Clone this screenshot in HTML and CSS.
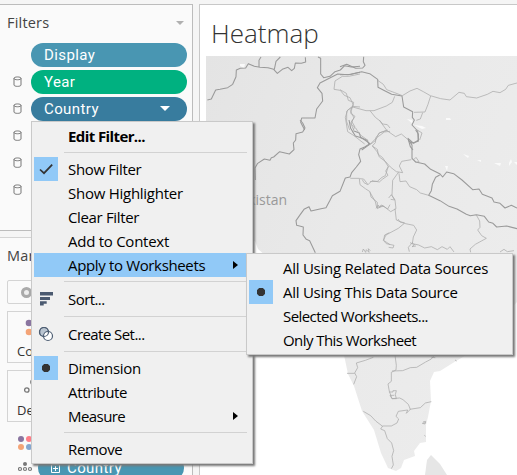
FILE: index.html
```html
<!DOCTYPE html>
<html lang="en"><head><meta charset="utf-8"><title>Heatmap</title><link rel="stylesheet" href="styles.css"></head>
<body>
<svg class="defs"><defs><symbol id="db" viewBox="0 0 9 11"><path d="M1 2.3C1 .5 8 .5 8 2.3V9C8 10.8 1 10.8 1 9ZM1 2.4C1 4.2 8 4.2 8 2.4" fill="none" stroke="#777"/></symbol></defs></svg>
<div class="app">
<aside class="side">
 <section class="panel filters">
  <header><h2>Filters</h2><i class="caret"></i></header>
  <div class="shelf"><span></span><b class="pill">Display</b></div>
  <div class="shelf"><svg><use href="#db"/></svg><b class="pill green">Year</b></div>
  <div class="shelf"><svg><use href="#db"/></svg><b class="pill dark">Country<i class="caret"></i></b></div>
  <div class="shelf"><svg><use href="#db"/></svg></div>
  <div class="shelf"><svg><use href="#db"/></svg></div>
  <div class="shelf"><svg><use href="#db"/></svg></div>
 </section>
 <section class="panel marks">
  <h2>Marks</h2>
  <div class="select"><i class="ring"></i></div>
  <div class="card"><svg width="26" height="18"><circle cx="4" cy="4" r="3.3" fill="#8a75a0"/><circle cx="4" cy="13" r="3.3" fill="#f4a477"/><circle cx="13" cy="4" r="3.3" fill="#ff7e88"/><circle cx="13" cy="13" r="3.3" fill="#86a7d0"/></svg><span>Color</span></div>
  <div class="card"><svg width="28" height="18"><g fill="none" stroke="#777" stroke-width="1.3"><circle cx="2.8" cy="12" r="2.2"/><circle cx="9" cy="4" r="2.2"/></g></svg><span>Detail</span></div>
  <div class="mark"><svg width="22" height="18"><circle cx="3" cy="4" r="3" fill="#8a75a0"/><circle cx="11" cy="4" r="3" fill="#ff7e88"/><circle cx="3" cy="12" r="3" fill="#f4a477"/><circle cx="11" cy="12" r="3" fill="#86a7d0"/></svg></div>
  <div class="mark last"><svg width="16" height="14"><circle cx="7" cy="4" r="2" fill="#777"/><g fill="none" stroke="#777" stroke-width="1.2"><circle cx="2" cy="9" r="1.5"/><circle cx="7" cy="9" r="1.5"/><circle cx="12" cy="9" r="1.5"/></g></svg><b class="pill"><svg width="9" height="9"><path d="M.5.5h8v8h-8zM2 4.5h5M4.5 2v5" fill="none" stroke="#fff"/></svg>Country</b></div>
 </section>
</aside>
<main class="sheet">
 <h1>Heatmap</h1>
 <svg class="map" viewBox="206 56 311 419">
  <defs><linearGradient id="land" x2="1" y2=".5"><stop stop-color="#e4e4e4"/><stop offset=".5" stop-color="#e9e9e9"/><stop offset="1" stop-color="#ececec"/></linearGradient></defs>
  <path d="M206 56H517V302L500 320 482 346 456 361 440 371 434 372 430 381 431 401 428 417 426 425V442L420 443 414 451 415 456 404 460 401 468 396 471 388 468 381 453 374 430 362 411 354 386 348 374 344 355 332 344 320 300 275 264 258 249 255 241 206 240Z" fill="url(#land)"/>
  <path d="M431 455 440 464 447 475H425L427 460Z" fill="#e6e6e6"/>
  <path d="M240 64l5 0-1 4-4-2zM407 119l5 1 2 5 8 1 4 2-4 1-8-4zM446 118l4 0 1 2-5 0zM463 154l6 2-1 2zM477 160h4v2zM494 163l7 0-1 3zM509 163l2-4 1 3-3 4zM514 162h3v3zM445 166l3 0-1 5z" fill="#fafafa"/>
  <g class="borders" transform="translate(200 0) scale(.33333)">
   <path d="M22 300L34 297 47 270 60 268 83 263 98 253 108 230 109 210 121 205 137 204 145 191 163 199 180 202 204 203 221 208 232 220 247 208 264 202 275 212 283 205 286 189 304 190 317 186 316 172M183 171L177 181 177 202M241 171L228 184 223 208M354 171L362 175 362 222 371 233 390 229 405 215 421 210 434 197 454 201 480 199M480 217L444 224 413 222 379 239 360 249 352 263 366 280 368 303 350 327 345 354 305 354 302 367 314 390"/>
   <path class="fine" d="M480 222L446 229 427 229 405 243 402 268 421 271 433 286 450 293 460 315 451 332 462 354 452 369 461 390M480 321L457 319 440 334 440 365 449 390"/>
  </g>
  <g class="borders" transform="translate(340 50) scale(.33333)">
   <path d="M0 50L20 43 47 55 68 54 75 46 70 35 71 20M0 74L34 73 65 65 89 71 113 88 114 112 134 122 155 133 186 138 191 171 218 185 217 202 223 210 216 225 233 243 235 270 221 280 204 265 211 290 219 300M65 300L88 284 81 271 62 263 58 249 42 243"/>
   <path class="fine" d="M113 91L130 103 140 119 164 128 187 137 210 123 231 115 250 125 271 137 302 146 330 150 357 127 373 130 379 140 410 144 442 133 459 124 480 128 497 118 505 106 531 99M272 138L264 163 255 186 222 187M164 139L157 157 139 168 102 182 78 182 38 171 23 180 16 202 23 245 42 257 74 282M0 119L19 130 25 151 41 157 37 171 32 190 45 199 35 214 44 229 38 247M90 182L106 202 119 212 141 242 167 260 184 252 203 268M142 241L117 249 106 272 90 284M248 188L241 207 229 211M232 240L246 249 239 270"/>
  </g>
  <g class="borders" transform="translate(250 120) scale(.33333)">
   <path d="M150 0L158 9 165 24 158 36 138 41 137 60 130 69 132 89 118 102 89 95 71 111 64 113 60 121 43 117 23 130 15 144 16 180M297 0L302 25 316 48 336 54 360 71 344 81 330 87 326 104 332 124 319 141 305 158 300 171 286 174 270 214 247 227 240 241 228 263 213 266 183 273 177 260 162 268 149 286 138 302 140 316 160 321 159 345 169 358 179 362 196 398"/>
   <path class="fine" d="M360 73L379 54 403 36 420 34M367 78L382 88 385 103 398 113 415 140 407 153 414 166 397 178 388 186 366 182 354 194 341 177 328 176 330 194 346 206 360 215 363 231 382 247 382 266 397 257 413 267 420 254M301 175H328M353 194L342 188 337 179M308 0L304 13 317 24 330 44 355 62M388 0L398 12 412 14 420 24M418 338L404 345 401 361 420 374M337 396l3-9 7 10 2-8 8 8-2-11 6 6"/>
  </g>
  <g class="borders" transform="translate(370 130) scale(.33333)">
   <path d="M114 28L126 45 126 85 137 96 164 102 182 118 209 131 218 141 230 126 251 131 276 150 308 179 327 177 337 193 366 204 372 216 390 220 405 234 424 226 441 234M209 135L197 142 187 163 184 182 176 196 210 212 237 229 261 237 289 253 301 257 319 254 343 259 356 276 369 280 380 291 410 288 441 296M137 0L145 12 145 34 126 39 115 31"/>
   <path class="fine" d="M52 0L30 8 18 22 16 38 7 48 22 66 28 81 47 95 61 111 79 125 98 128 88 108 95 94 124 89M0 155L22 154 36 142 46 137 55 109M86 126L68 151 66 196 75 210 78 236 62 245 42 229 20 232 16 215 0 187M87 130L90 155 108 153 119 170 140 179 151 189 176 196M75 236L79 270 102 280 131 286 140 300 130 321 127 341 146 345 164 354 184 350 202 359 216 350 232 358 240 350 252 366M102 281L85 295 48 315 40 331 49 341 72 346 69 354 56 352M128 337L115 352 118 365M319 255L329 273 330 292 323 300 335 317 349 325 316 343 300 357 302 367"/>
   <path class="fine" d="M18 235l7-10 4 8 4-8 8 3M56 204l8-10 10 16-12-2M84 267l6 9 14 2M120 338l14 6-8 6 12-2M130 90l8-8 9 13-10 2M390 366l12-8 10 7 20-3"/>
  </g>
  <g class="borders" transform="translate(320 350) scale(.33333)">
   <path class="fine" d="M160 22L136 31 109 39 113 53 104 69 110 80 101 103M81 70H104M225 15L229 46 228 60 214 67 214 94 204 102 208 124 216 146 239 144 249 149 265 163 271 178 259 190 263 180 235 184 228 199 236 207 231 219 214 228 188 228 182 237 194 242 202 266 215 279 221 302 216 319 220 345 214 356M130 184L152 197 167 213 188 229M216 63L248 62 271 53 290 52 317 36 334 27 342 17M269 178L301 173 316 159 334 155"/>
   <path class="fine" d="M207 126h12v-4h10l-3 12 3 12h-13l-6-10h13M309 216l8-2-2 8-8-2 10-2M313 256l4 3M334 22l12 1M405 30l5 3"/>
  </g>
  <text x="232" y="205">Pakistan</text>
 </svg>
</main>
</div>

<div class="menu main-menu">
 <div class="item strong">Edit Filter...</div>
 <hr class="s1">
 <div class="item"><i class="on"><svg width="24" height="24"><path d="M6 12.5L10 16.2 18.2 7.7" fill="none" stroke="#333" stroke-width="1.7"/></svg></i>Show Filter</div>
 <div class="item wide">Show Highlighter</div><div class="item">Clear Filter</div><div class="item wide">Add to Context</div>
 <div class="item active">Apply to Worksheets<u></u></div>
 <hr class="s2">
 <div class="item tight"><i><svg width="24" height="24"><path d="M6 5h13v3.5H6zM6 10h10v3H6zM6 14.3h6.7v2.5H6zM6 15.5h3.7v3H6z" fill="#4b5a70"/></svg></i>Sort...</div>
 <hr class="s2b">
 <div class="item tight"><i><svg width="24" height="24"><g fill="#bac5d1" stroke="#4e5e73" stroke-width="1.2"><circle cx="10" cy="10" r="4.5"/><circle cx="14" cy="14" r="4.5" fill="#fff"/><circle cx="10" cy="10" r="4.5" fill="none"/></g></svg></i>Create Set...</div>
 <hr class="s3">
 <div class="item wide"><i class="on dot"></i>Dimension</div><div class="item">Attribute</div><div class="item tight">Measure<u></u></div>
 <hr class="s4">
 <div class="item">Remove</div>
</div>
<div class="menu sub-menu">
 <div class="item wide">All Using Related Data Sources</div>
 <div class="item wide"><i class="on dot"></i>All Using This Data Source</div>
 <div class="item tight">Selected Worksheets...</div>
 <div class="item tight">Only This Worksheet</div>
</div>
</body></html>
```
FILE: styles.css
```css
*{box-sizing:border-box}
body{margin:0;width:517px;height:475px;overflow:hidden;background:#f5f5f5;font-family:"Open Sans","Noto Sans",sans-serif;color:#333}
h1,h2{margin:0;font-weight:400}
.defs{position:absolute;width:0;height:0}
.app{display:flex;gap:6px;height:475px;padding-top:4px}
.side{width:193px;flex:none;display:flex;flex-direction:column;gap:6px}
.panel{background:#fafafa;border:solid #bcbcbc;border-width:1px 1px 1px 0}
.filters{height:227px}
h2{font-family:"Open Sans",sans-serif;font-size:14.5px;line-height:20px;letter-spacing:.2px;color:#444}
header{display:flex;justify-content:space-between;align-items:center;padding:8px 8px 0 7px;height:36px}
header h2{margin-top:-9px}
.caret{width:0;height:0;border:4px solid transparent;border-top-color:#b0b0b0;border-bottom:0}
header .caret{margin-top:-9px}
.shelf{height:27px;display:flex;align-items:center;padding-left:13px}
.shelf>svg,.shelf>span{width:9px;height:11px;margin-right:9px;flex:none}
.pill{width:156px;height:24px;border-radius:12px;background:#4996b2;color:#fff;font:400 15px/24px Roboto,sans-serif;letter-spacing:.4px;padding:0 17px 0 13px;display:flex;align-items:center;justify-content:space-between}
.green{background:#00b180}.dark{background:#387c9e}
.dark .caret{border-width:5px 5px 0;border-top-color:#fff}
.marks{height:238px;border-bottom:0;padding:8px 7px 0;border-top-color:#d4d4d4}
.select{width:170px;height:24px;margin-top:14px;border:1px solid #d4d4d4;border-radius:2px;padding:6px 13px}
.ring{display:block;width:11px;height:11px;border:3px solid #aaa;border-radius:50%;background:#eee}
.card{width:52px;height:52px;border:1px solid #d4d4d4;margin-top:7px;display:flex;flex-direction:column;align-items:center;padding-top:7px;font-size:13px;line-height:20px}
.card svg{margin-left:10px}
.card span{margin-top:4px;width:32px}
.mark{height:27px;padding:13px 11px 0}
.mark.last{padding:7px 0 0 11px;display:flex;align-items:flex-start}
.mark.last>svg{flex:none;margin-top:4px}
.mark.last .pill{margin-left:4px;width:146px;justify-content:flex-start;gap:7px;flex:none}
.sheet{flex:1;background:#fff;border:solid #c8c8c8;border-width:1px 0 0 1px;padding-left:6px}
h1{font:300 26px/36px "Open Sans",sans-serif;letter-spacing:0;height:51px;padding:10px 0 0 5px;color:#333}
.map{display:block;width:311px;height:419px}
.map text{font:14px "Open Sans",sans-serif;fill:#999}
.borders path{fill:none;stroke:#9a9a9a;stroke-width:3.2;stroke-linejoin:round}
.borders .fine{stroke:#a8a8a8;stroke-width:2.2}
.menu{position:absolute;background:#f0f0f0;border:1px solid #c9c9c9;padding:2px;box-shadow:2px 2px 2px #777;color:#000;font-size:15px}
.main-menu{left:31px;top:121px;width:222px;height:343px}
.sub-menu{left:246px;top:253px;width:267px;height:102px}
.item{height:24px;line-height:24px;display:flex;padding-left:34px;white-space:nowrap;align-items:center;letter-spacing:-.35px}
.item i{width:24px;height:24px;margin:0 10px 0 -34px;flex:none}
.item svg{display:block}
.wide{letter-spacing:-.26px}
.tight{letter-spacing:-.56px}
.on,.active{background:#91c9f7}
.dot{background:radial-gradient(circle at center,#333 0 4px,#91c9f7 4.5px)}
.strong{font-weight:700;letter-spacing:-.6px}
.item u{margin-left:auto;margin-right:12px;border:4px solid transparent;border-left:5px solid #000;border-right:0}
hr{border:0;border-top:1px solid #d2d2d2;margin:0 3px 0 30px}
hr.s1{margin-top:4px;margin-bottom:4px}
hr.s2{margin-top:4px;margin-bottom:5px}
hr.s2b{margin-top:5px;margin-bottom:5px}
hr.s3{margin-top:5px;margin-bottom:4px}
hr.s4{margin-top:4px;margin-bottom:4px}
```
